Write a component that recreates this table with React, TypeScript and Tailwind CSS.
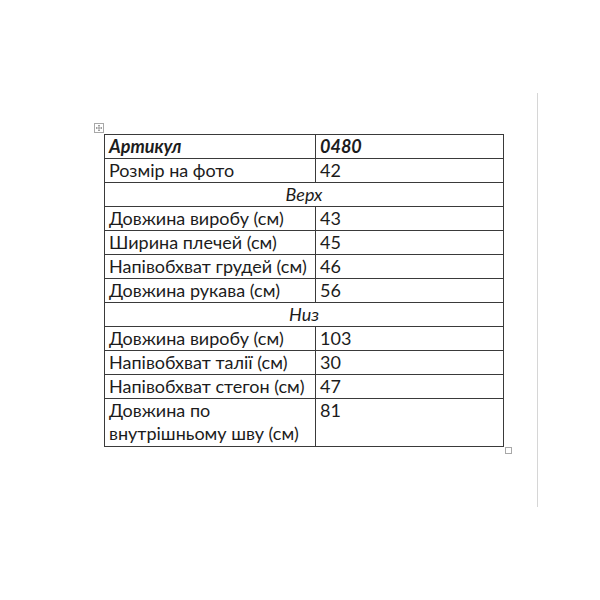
const rows: [string, string][] = [
  ["Довжина виробу (см)", "43"],
  ["Ширина плечей (см)", "45"],
  ["Напівобхват грудей (см)", "46"],
  ["Довжина рукава (см)", "56"],
];

const rowsBottom: [string, string][] = [
  ["Довжина виробу (см)", "103"],
  ["Напівобхват талії (см)", "30"],
  ["Напівобхват стегон (см)", "47"],
];

const cell = "border border-[#3a3a3a] px-[4px] py-0 align-top text-left";

const MoveHandle = () => (
  <svg width="10" height="10" viewBox="0 0 10 10" className="absolute left-[-10px] top-[30px]">
    <rect x="0.5" y="0.5" width="9" height="9" fill="white" stroke="#a8a8a8" />
    <path d="M5 2v6M2 5h6" stroke="#8a8a8a" strokeWidth="0.8" />
    <path d="M4 3l1-1 1 1M4 7l1 1 1-1M3 4l-1 1 1 1M7 4l1 1-1 1" fill="none" stroke="#8a8a8a" strokeWidth="0.7" />
  </svg>
);

const App = () => {
  return (
    <div className="w-[600px] h-[600px] bg-white flex pt-[93px] font-['Lato',sans-serif] text-[#1c1c1c]">
      <div className="relative ml-[104px] pt-[41px] self-start">
        <MoveHandle />
        <table className="border-collapse w-[400px] text-[18px] leading-[23px] table-fixed">
          <colgroup>
            <col className="w-[211px]" />
            <col />
          </colgroup>
          <tbody>
            <tr>
              <td className={`${cell} font-bold italic`}>Артикул</td>
              <td className={`${cell} font-bold italic`}>0480</td>
            </tr>
            <tr>
              <td className={cell}>Розмір на фото</td>
              <td className={cell}>42</td>
            </tr>
            <tr>
              <td colSpan={2} className={`${cell} italic !text-center`}>Верх</td>
            </tr>
            {rows.map(([k, v], i) => (
              <tr key={`t${i}`}>
                <td className={cell}>{k}</td>
                <td className={cell}>{v}</td>
              </tr>
            ))}
            <tr>
              <td colSpan={2} className={`${cell} italic !text-center`}>Низ</td>
            </tr>
            {rowsBottom.map(([k, v], i) => (
              <tr key={`b${i}`}>
                <td className={cell}>{k}</td>
                <td className={cell}>{v}</td>
              </tr>
            ))}
            <tr>
              <td className={`${cell} pb-px`}>
                Довжина по
                <br />
                внутрішньому шву (см)
              </td>
              <td className={cell}>81</td>
            </tr>
          </tbody>
        </table>
        {/* resize handle */}
        <div className="absolute right-[-8px] bottom-[-7px] w-[7px] h-[7px] border border-[#a8a8a8] bg-white" />
      </div>
      <div className="ml-auto mr-[62px] w-px h-[414px] bg-[#d6d6d6]" />
    </div>
  );
};

export default App;
